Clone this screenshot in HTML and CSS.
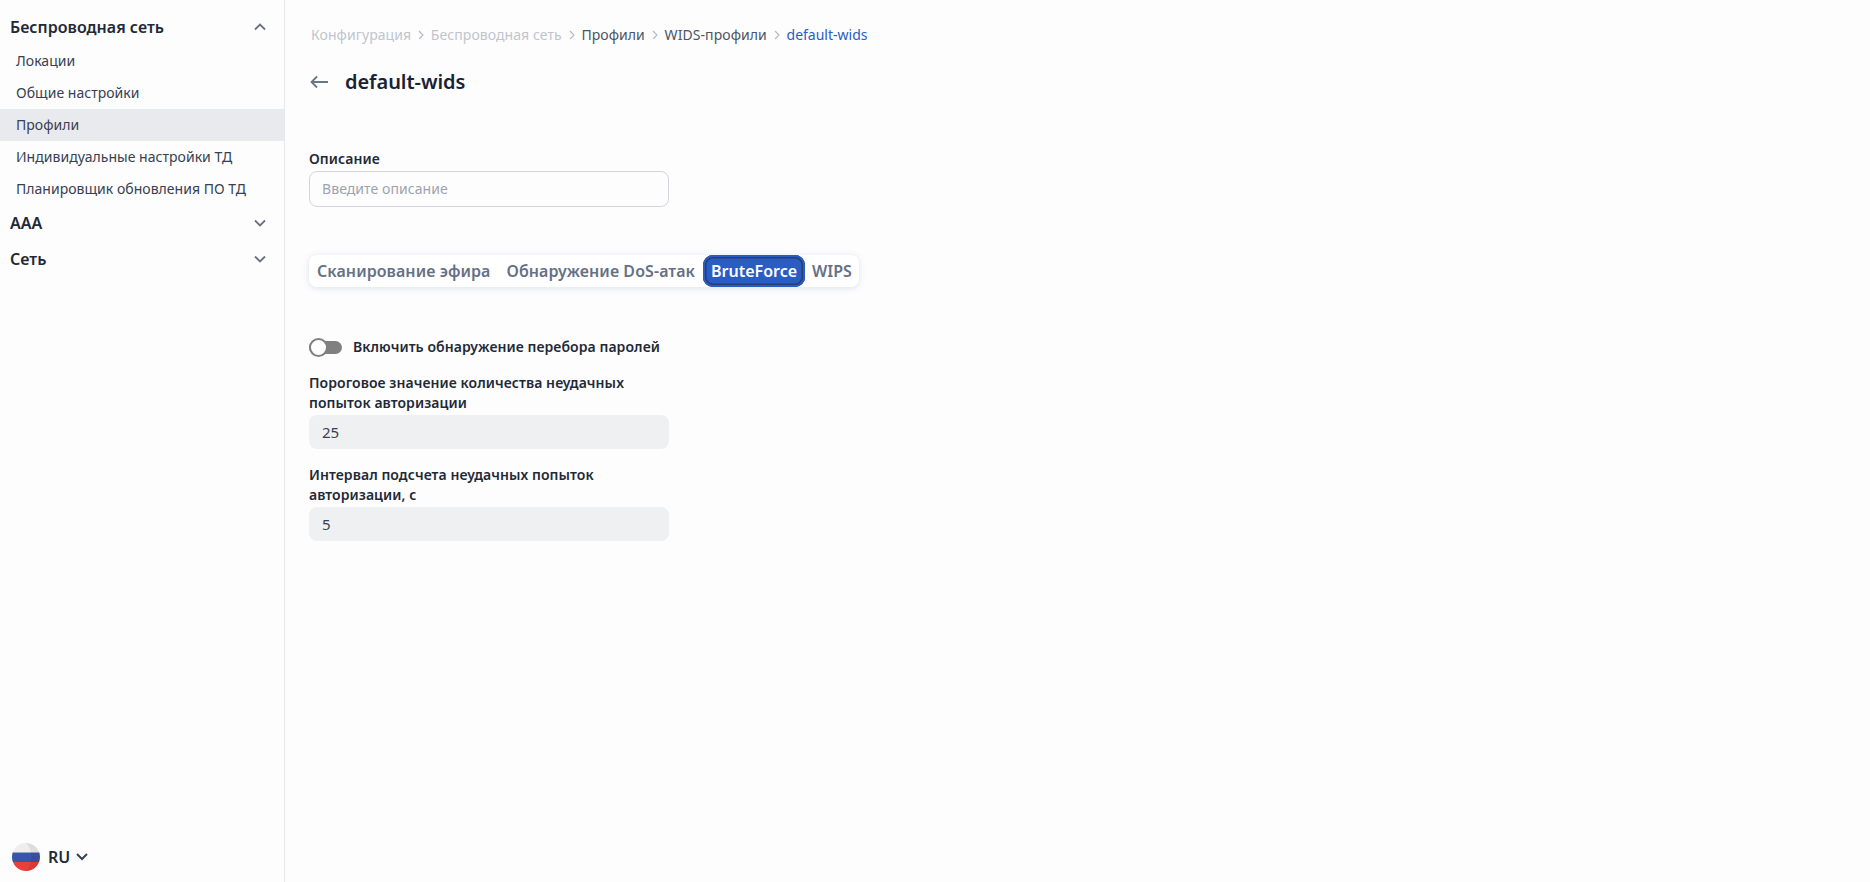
FILE: index.html
```html
<!DOCTYPE html>
<html lang="ru">
<head>
<meta charset="utf-8">
<title>default-wids</title>
<link rel="stylesheet" href="styles.css">
</head>
<body>
<div class="app">
  <aside class="sidebar">
    <nav class="nav">
      <div class="nav-head"><span>Беспроводная сеть</span>
        <svg class="chev" viewBox="0 0 16 16"><path d="M3 10.5 8 5.5l5 5"/></svg></div>
      <a class="nav-item">Локации</a>
      <a class="nav-item">Общие настройки</a>
      <a class="nav-item active">Профили</a>
      <a class="nav-item">Индивидуальные настройки ТД</a>
      <a class="nav-item">Планировщик обновления ПО ТД</a>
      <div class="nav-head"><span>AAA</span>
        <svg class="chev" viewBox="0 0 16 16"><path d="M3 5.500l5 5 5-5"/></svg></div>
      <div class="nav-head"><span>Сеть</span>
        <svg class="chev" viewBox="0 0 16 16"><path d="M3 5.500l5 5 5-5"/></svg></div>
    </nav>
    <div class="lang">
      <svg class="flag" viewBox="0 0 28 28">
        <defs><clipPath id="flagclip"><circle cx="14" cy="14" r="14"/></clipPath></defs>
        <g clip-path="url(#flagclip)">
          <rect width="28" height="9.5" fill="#eeeeee"/>
          <rect y="9.5" width="28" height="9.5" fill="#3a55a8"/>
          <rect y="19" width="28" height="9" fill="#e9403c"/>
          <path d="M14 28a14 14 0 0 0 0-28c7 6 7 22 0 28z" fill="#000" opacity=".07"/>
        </g>
      </svg>
      <span class="lang-code">RU</span>
      <svg class="lang-chev" viewBox="0 0 14 12"><path d="M2 3l5 5 5-5"/></svg>
    </div>
  </aside>
  <main class="main">
    <div class="crumbs">
      <span class="crumb muted cyr">Конфигурация</span><svg class="sep" viewBox="0 0 8 10"><path d="M2 1l4 4-4 4"/></svg>
      <span class="crumb muted cyr">Беспроводная сеть</span><svg class="sep" viewBox="0 0 8 10"><path d="M2 1l4 4-4 4"/></svg>
      <span class="crumb cyr">Профили</span><svg class="sep" viewBox="0 0 8 10"><path d="M2 1l4 4-4 4"/></svg>
      <span class="crumb cyr">WIDS-профили</span><svg class="sep" viewBox="0 0 8 10"><path d="M2 1l4 4-4 4"/></svg>
      <span class="crumb current">default-wids</span>
    </div>
    <div class="title-row">
      <svg class="back" viewBox="0 0 18 14"><path d="M18 7H1.500M7 1.500 1.500 7 7 12.500"/></svg>
      <h1 class="title">default-wids</h1>
    </div>
    <div class="field desc">
      <label class="label cyr">Описание</label>
      <div class="input placeholder cyr">Введите описание</div>
    </div>
    <div class="tabs">
      <div class="tab cyr">Сканирование эфира</div>
      <div class="tab cyr">Обнаружение DoS-атак</div>
      <div class="tab selected">BruteForce</div>
      <div class="tab last">WIPS</div>
    </div>
    <div class="toggle-row">
      <span class="toggle"><span class="knob"></span></span>
      <span class="label toggle-label cyr">Включить обнаружение перебора паролей</span>
    </div>
    <div class="field first">
      <label class="label cyr">Пороговое значение количества неудачных попыток авторизации</label>
      <div class="input filled">25</div>
    </div>
    <div class="field second">
      <label class="label cyr">Интервал подсчета неудачных попыток авторизации, с</label>
      <div class="input filled">5</div>
    </div>
  </main>
</div>
</body>
</html>
```
FILE: styles.css
```css
* { box-sizing: border-box; }
html, body { margin: 0; height: 100%; }
body {
  font-family: "Noto Sans", sans-serif;
  background: #fdfdfd;
  color: #1f2937;
  overflow: hidden;
}
.app { display: flex; height: 882px; }
.sidebar {
  width: 285px;
  flex: none;
  border-right: 1px solid #e5e7eb;
  display: flex;
  flex-direction: column;
  justify-content: space-between;
  padding-top: 9px;
}
.nav { display: flex; flex-direction: column; }
.nav-head {
  height: 36px;
  display: flex;
  align-items: center;
  justify-content: space-between;
  padding: 0 16px 0 10px;
  font-size: 16px;
  font-weight: 600;
  color: #1f2937;
  letter-spacing: .02px;
}
.chev { width: 16px; height: 16px; fill: none; stroke: #6b7280; stroke-width: 1.8; }
.nav-item {
  height: 32px;
  display: flex;
  align-items: center;
  padding: 0 0 2px 16px;
  font-size: 14px;
  color: #374151;
  letter-spacing: .03px;
}
.nav-item.active { background: #e9eaed; }
.lang {
  display: flex;
  align-items: center;
  height: 50px;
  padding-left: 12px;
}
.flag { width: 28px; height: 28px; }
.lang-code { font-size: 16px; font-weight: 600; margin-left: 8px; color: #1f2937; }
.lang-chev { width: 14px; height: 12px; margin-left: 5px; fill: none; stroke: #374151; stroke-width: 2; }
.main { flex: 1; padding: 24px 24px 0; min-width: 0; }
.crumbs { display: flex; align-items: center; height: 22px; font-size: 14px; padding: 0 0 1px 2px; }
.crumb { color: #4b5563; }
.crumb.muted { color: #c0c5cd; }
.crumb.current { color: #2a5cc4; }
.cyr { letter-spacing: .07px; }
.sep { width: 8px; height: 10px; margin: 0 5.85px; fill: none; stroke: #b6bcc6; stroke-width: 1.2; }
.title-row { display: flex; align-items: center; height: 28px; margin-top: 22px; }
.back { width: 18px; height: 14px; margin-left: 1px; fill: none; stroke: #6b7488; stroke-width: 1.8; }
.title { margin: 0 0 0 17px; font-size: 20px; line-height: 28px; font-weight: 600; color: #1a2236; letter-spacing: -.05px; }
.field { width: 360px; }
.desc { margin-top: 53px; }
.label { display: block; font-size: 14px; line-height: 20px; font-weight: 600; color: #1f2937; }
.input {
  height: 36px;
  margin-top: 2px;
  border-radius: 8px;
  display: flex;
  align-items: center;
  padding-left: 12px;
  font-size: 14px;
}
.placeholder { border: 1px solid #d1d5db; color: #9ca3af; background: #fdfdfd; padding-bottom: 2px; }
.filled { height: 34px; background: #eff0f2; color: #374151; margin-top: 2px; font-size: 15px; padding-left: 13px; }
.tabs {
  display: inline-flex;
  align-items: center;
  height: 32px;
  margin-top: 48px;
  background: #fff;
  border-radius: 8px;
  box-shadow: 0 1px 6px rgba(90, 110, 170, .2);
  font-size: 16px;
  font-weight: 600;
  color: #667085;
}
.tab { height: 32px; display: flex; align-items: center; padding: 0 8px; white-space: nowrap; }
.tab.last { padding: 0 7px; }
.selected {
  color: #fff;
  background: #2a5cc4;
  border-radius: 10px;
  box-shadow: inset 0 0 0 2px #2a5cc4, inset 0 0 0 3.5px #27406f;
}
.toggle-row { display: flex; align-items: center; height: 20px; margin-top: 50px; }
.toggle {
  position: relative;
  width: 33px;
  height: 13px;
  background: #808080;
  border-radius: 7px;
}
.knob {
  position: absolute;
  left: 0;
  top: -3px;
  width: 19px;
  height: 19px;
  border-radius: 50%;
  background: #fff;
  border: 2px solid #808080;
}
.toggle-label { margin-left: 11px; }
.first { margin-top: 16px; }
.second { margin-top: 16px; }
```
